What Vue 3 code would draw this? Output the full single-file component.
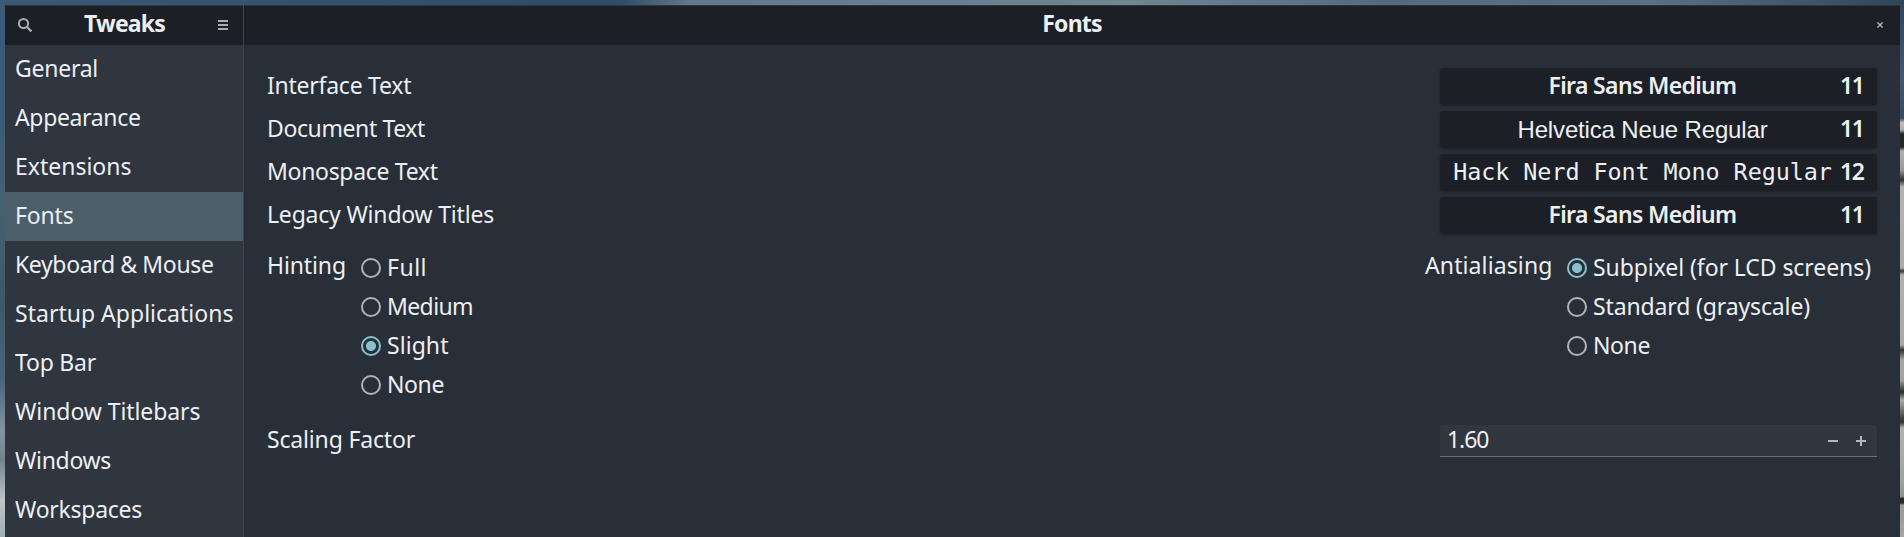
<script setup>
const sections = [
  ['General', 83], ['Appearance', 125.5], ['Extensions', 116.5], ['Fonts', 58.5],
  ['Keyboard & Mouse', 198.5], ['Startup Applications', 218.5], ['Top Bar', 81],
  ['Window Titlebars', 185.5], ['Windows', 96], ['Workspaces', 127],
]
const fonts = [
  { label: 'Interface Text', lw: 144.3, name: 'Fira Sans Medium', nw: 188, size: 11, face: 'medium' },
  { label: 'Document Text', lw: 158, name: 'Helvetica Neue Regular', nw: 250, size: 11, face: 'helvetica' },
  { label: 'Monospace Text', lw: 170.7, name: 'Hack Nerd Font Mono Regular', nw: 378.5, size: 12, face: 'mono' },
  { label: 'Legacy Window Titles', lw: 227, name: 'Fira Sans Medium', nw: 188, size: 11, face: 'medium' },
]
const groups = [
  { label: 'Hinting', lw: 79, active: 'Slight', options: [['Full', 40], ['Medium', 86], ['Slight', 61.5], ['None', 57]] },
  { label: 'Antialiasing', lw: 127.5, active: 'Subpixel (for LCD screens)', options: [['Subpixel (for LCD screens)', 278], ['Standard (grayscale)', 217], ['None', 57]] },
]

// Tracks the text so that its advance equals the given width.
const vFit = {
  mounted(el, { value }) {
    const range = document.createRange()
    range.selectNodeContents(el)
    const natural = range.getBoundingClientRect().width
    el.style.letterSpacing = (value - natural) / el.textContent.length + 'px'
  },
}
</script>

<template>
  <div class="desktop">
    <div class="window">
      <aside class="side">
        <header class="bar">
          <svg class="search" width="16" height="16" viewBox="0 0 16 16">
            <circle cx="6.5" cy="6.5" r="4.6" fill="none" stroke="#a9adb5" stroke-width="2" />
            <path d="M9.8 9.8 L14.4 14.4" stroke="#a9adb5" stroke-width="2.2" />
          </svg>
          <span v-fit="81" class="title">Tweaks</span>
          <svg class="menu" width="10" height="10" viewBox="0 0 10 10">
            <path d="M0 1H10M0 5H10M0 9H10" stroke="#a9adb5" stroke-width="2" />
          </svg>
        </header>
        <nav>
          <div v-for="[name, w] in sections" :key="name" class="item" :class="{ on: name === 'Fonts' }">
            <span v-fit="w">{{ name }}</span>
          </div>
        </nav>
      </aside>
      <main class="content">
        <header class="bar">
          <span v-fit="59.5" class="title">Fonts</span>
          <svg class="close" width="6" height="6" viewBox="0 0 6 6">
            <path d="M0.4 0.4L5.6 5.6M5.6 0.4L0.4 5.6" stroke="#b4b8be" stroke-width="1.3" />
          </svg>
        </header>
        <div class="body">
          <div v-for="f in fonts" :key="f.label" class="row">
            <span v-fit="f.lw" class="label">{{ f.label }}</span>
            <button class="fontbtn">
              <span class="name"><span v-fit="f.nw" :class="f.face">{{ f.name }}</span></span>
              <span class="size">{{ f.size }}</span>
            </button>
          </div>
          <div class="groups">
            <div v-for="g in groups" :key="g.label" class="group">
              <span class="glabel"><span v-fit="g.lw">{{ g.label }}</span></span>
              <div class="options">
                <div v-for="[name, w] in g.options" :key="name" class="option">
                  <i class="radio" :class="{ on: name === g.active }"></i>
                  <span v-fit="w">{{ name }}</span>
                </div>
              </div>
            </div>
          </div>
          <div class="row scaling">
            <span v-fit="148" class="label">Scaling Factor</span>
            <div class="spin">
              <span v-fit="41.5" class="value">1.60</span>
              <svg width="38" height="10" viewBox="0 0 38 10">
                <path d="M0 5H10M28 5H38M33 0V10" stroke="#b4b8be" stroke-width="2" />
              </svg>
            </div>
          </div>
        </div>
      </main>
    </div>
  </div>
</template>

<style>
body { overflow: hidden; }
</style>

<style scoped>
.desktop {
  box-sizing: border-box;
  width: 1904px;
  height: 537px;
  padding: 5px 4px 0 5px;
  background:
    linear-gradient(90deg, #3b5875 0, #33526e 300px, #304d66 620px, #62788b 690px, #738493 1130px, #536b80 1380px, #5b7082 1650px, #34495d 1880px, #2e455a 1904px) 0 0 / 100% 5px no-repeat,
    linear-gradient(#3c5a78 0, #3d5a76 120px, #456270 200px, #3f5867 300px, #4c6477 380px, #8494a0 430px, #728491 460px, #bcc4c7 500px, #a2adb5 537px) 0 0 / 5px 100% no-repeat,
    linear-gradient(#2f465b 0, #43596a 80px, #34495b 118px, #c0c0c0 123px, #a9a9aa 130px, #22272a 134px, #242829 147px, #b0b0b0 151px, #999 170px, #2b2e30 180px, #b5b3b4 187px, #aaa8aa 268px, #303335 271px, #b2afb1 275px, #aaa6a9 345px, #2c3133 350px, #a7a7a8 360px, #a3a2a3 380px, #202c2f 392px, #aaa 400px, #2c3031 422px, #b0b0b0 428px, #9da4a5 480px, #8b9091 497px, #25292a 498px, #25292a 503px, #999 505px, #a5a4a5 537px) 100% 0 / 4px 100% no-repeat,
    #2a2f39;
  font: 23px/1 "Noto Sans", sans-serif;
  color: #eceff4;
  white-space: nowrap;
}
.window {
  display: flex;
  height: 532px;
  border-radius: 3px 3px 0 0;
  overflow: hidden;
  background: #292f38;
}
.side {
  width: 238px;
  border-right: 1px solid #3d444c;
  background: #2f363f;
}
.bar {
  display: flex;
  align-items: center;
  height: 40px;
  box-sizing: border-box;
  background: #1c2026;
  border-top: 1px solid #2e363c;
}
.bar svg { margin-bottom: 1px; }
.title { font-weight: 700; padding-bottom: 5px; }
.side .bar { justify-content: space-between; padding: 0 15px 0 12px; }
.side .title { position: relative; left: -1px; }
.content { flex: 1; }
.content .bar { display: grid; grid-template-columns: 1fr auto 1fr; }
.content .title { grid-column: 2; }
.close { justify-self: end; margin-right: 17px; }
.item {
  display: flex;
  align-items: center;
  height: 49px;
  box-sizing: border-box;
  padding: 0 0 3px 10px;
}
.item.on { background: #4b5f6b; }
.body { padding: 23px 23px 0; }
.row {
  display: flex;
  justify-content: space-between;
  align-items: center;
  height: 37px;
  margin-bottom: 6px;
}
.label { padding-bottom: 3px; }
.fontbtn {
  display: flex;
  align-items: center;
  gap: 7px;
  width: 437px;
  height: 37px;
  padding: 0 15px 3px 12px;
  border: 0;
  border-radius: 3px;
  background: #1c2026;
  box-shadow: 0 1px 3px rgba(0, 0, 0, 0.3);
  font: inherit;
  color: inherit;
}
.name { flex: 1; display: flex; justify-content: center; }
.size { width: 22px; text-align: right; font-weight: 600; letter-spacing: -1.5px; }
.medium { font-weight: 600; }
.helvetica { font: 24px/24px "Liberation Sans", Arial, sans-serif; padding-top: 3px; }
.mono { font: 23.4px/24px "DejaVu Sans Mono", monospace; padding-top: 1px; }
.groups {
  display: flex;
  justify-content: space-between;
  height: 165px;
  padding-top: 8px;
  box-sizing: border-box;
}
.group { display: flex; }
.group:last-child { width: 452px; }
.glabel { display: flex; align-items: center; height: 40px; box-sizing: border-box; padding-bottom: 5px; margin-right: 15px; }
.group:last-child .glabel { margin-right: 14.5px; }
.option { display: flex; align-items: center; gap: 6px; height: 39px; }
.option span { padding-bottom: 0; }
.radio {
  box-sizing: border-box;
  width: 20px;
  height: 20px;
  border: 2px solid #b0b3ba;
  border-radius: 50%;
}
.radio.on {
  border-color: #88c0d0;
  background: radial-gradient(circle, #88c0d0 4.6px, transparent 5.4px);
}
.scaling { margin: 20px 0 0; height: 32px; }
.spin {
  display: flex;
  align-items: center;
  justify-content: space-between;
  box-sizing: border-box;
  width: 437px;
  height: 32px;
  padding: 0 11px 0 7px;
  border-bottom: 1px solid #6d707a;
  border-radius: 3px 3px 0 0;
  background: #31363f;
}
.value { padding-bottom: 2px; }
</style>
